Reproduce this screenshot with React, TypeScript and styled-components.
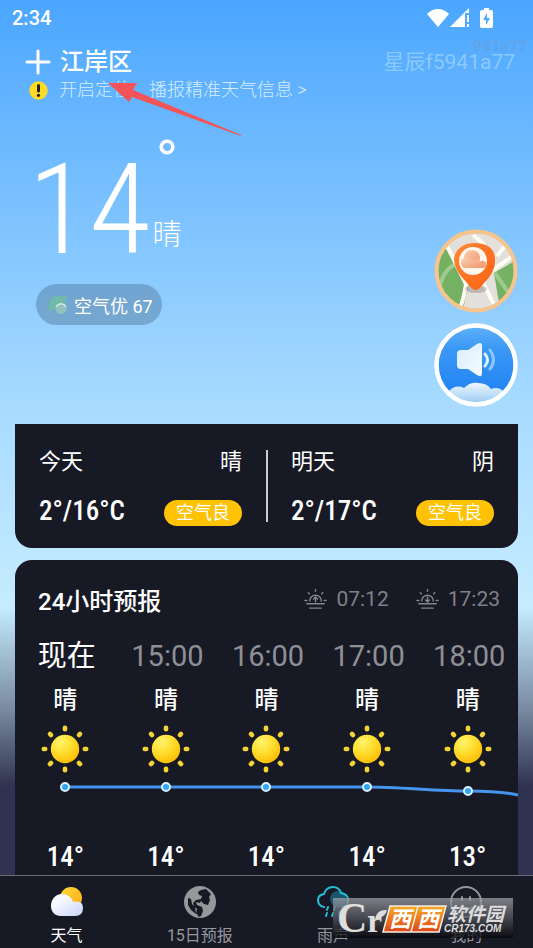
import React from 'react';
import styled, { createGlobalStyle } from 'styled-components';

const GlobalStyle = createGlobalStyle`
  *, *::before, *::after { box-sizing: border-box; }
  body {
    margin: 0;
    font-family: Roboto, "Noto Sans CJK SC", sans-serif;
    color: #fff;
  }
  button { font: inherit; color: inherit; background: none; border: 0; padding: 0; cursor: pointer; }
  svg { display: block; }
`;

const Shell = styled.div`
  position: relative;
  display: flex;
  flex-direction: column;
  height: 100vh;
  background: linear-gradient(180deg, #4ba6ff 0%, #6bb8ff 14%, #a8dbff 43%, #c5ecff 64%, #77889f 75%, #2f3250 83%, #2f3250 100%);
`;

const StatusBar = styled.div`
  display: flex;
  align-items: center;
  justify-content: space-between;
  height: 36px;
  padding: 0 40px 0 12px;
  font-size: 20px;
  font-weight: 500;
`;

const StatusIcons = styled.div`
  display: flex;
  align-items: center;
`;

const BatterySlot = styled.span`
  margin-left: 10px;
`;

const Scroller = styled.main`
  flex: 1;
  min-height: 0;
  overflow: hidden;
  padding: 0 15px;
`;

const Header = styled.header`
  display: flex;
  align-items: center;
  justify-content: space-between;
  height: 44px;
  padding: 8px 3px 0 10px;
`;

const Place = styled.button`
  display: flex;
  align-items: center;
  gap: 9px;
  font-size: 24px;
  font-weight: 500;
  line-height: 32px;
`;

const UserId = styled.span`
  font-size: 21px;
  line-height: 32px;
  color: rgba(190, 228, 255, 0.5);
`;

const Notice = styled.button`
  display: flex;
  align-items: center;
  gap: 11px;
  height: 20px;
  margin-left: 14px;
  font-size: 18px;
  font-weight: 300;
  line-height: 20px;
  color: #d3ecff;
`;

const Hero = styled.section`
  display: flex;
  justify-content: space-between;
  height: 324px;
  padding-left: 21px;
`;

const Now = styled.div`
  display: flex;
  flex-direction: column;
  align-items: flex-start;
  padding-top: 36px;
`;

const Reading = styled.div`
  display: flex;
  align-items: flex-start;
  gap: 2px;
  height: 128px;
`;

const BigTemp = styled.span`
  padding-top: 10px;
  font-family: "Roboto Condensed", Roboto, sans-serif;
  font-size: 126px;
  font-weight: 300;
  line-height: 128px;
  margin-left: -8px;
`;

const Aside = styled.div`
  display: flex;
  flex-direction: column;
  justify-content: space-between;
  align-items: center;
  height: 118px;
  padding-top: 3px;
  font-size: 29px;
  font-weight: 300;
  line-height: 38px;
`;

const AirQuality = styled.button`
  display: flex;
  align-items: center;
  gap: 7px;
  height: 41px;
  margin-top: 20px;
  padding: 0 9px 0 13px;
  border-radius: 21px;
  background: rgba(74, 112, 146, 0.42);
  font-size: 18px;
`;

const Shortcuts = styled.div`
  display: flex;
  flex-direction: column;
  gap: 10px;
  padding-top: 129px;
`;

const Card = styled.section<{ $joined?: boolean }>`
  border-radius: ${(p) => (p.$joined ? '0 0 17px 17px' : '17px')};
  background: #171925;
  margin-bottom: 12px;
`;

const Days = styled(Card)`
  display: grid;
  grid-template-columns: 1fr 1px 1fr;
  padding: 26px 0 22px;
`;

const Hourly = styled(Card)`
  padding-bottom: 40px;
`;

const Divider = styled.div`
  background: #c9cad2;
  width: 2px;
  height: 72px;
`;

const Day = styled.article`
  display: flex;
  flex-direction: column;
  justify-content: space-between;
  height: 76px;
  padding: 2px 24px 0;
`;

const DayLine = styled.div`
  display: flex;
  align-items: center;
  justify-content: space-between;
  font-size: 22px;
  line-height: 20px;
  white-space: nowrap;
`;

const Range = styled.span`
  font-family: "Roboto Condensed", Roboto, sans-serif;
  font-size: 27px;
  line-height: 24px;
  font-weight: 500;
`;

const Badge = styled.span`
  margin-top: 4px;
  padding: 0 12px;
  border-radius: 14px;
  background: #ffc204;
  font-size: 18px;
  line-height: 26px;
`;

const HourlyHead = styled.div`
  display: flex;
  align-items: center;
  height: 78px;
  padding: 0 18px 0 23px;
`;

const HourlyTitle = styled.h2`
  flex: 1;
  margin: 0;
  font-size: 24px;
  font-weight: 500;
`;

const SunTime = styled.span`
  display: flex;
  align-items: center;
  gap: 9px;
  margin-left: 27px;
  font-size: 21px;
  color: #808188;
`;

const Hours = styled.div`
  display: grid;
  grid-template-columns: repeat(5, 1fr);
  justify-items: center;
`;

const HourTime = styled.span<{ $current: boolean }>`
  padding-left: 3px;
  font-size: 29px;
  line-height: 36px;
  color: ${(p) => (p.$current ? '#fff' : '#8f9095')};
`;

const HourSky = styled.span`
  margin: 8px 0 6px;
  font-size: 24px;
  font-weight: 500;
  line-height: 36px;
`;

const HourTemp = styled.span`
  font-family: "Roboto Condensed", Roboto, sans-serif;
  font-size: 27px;
  font-weight: 500;
  line-height: 30px;
`;

const Curve = styled.svg`
  width: 100%;
  margin: 6px 0 42px;
`;

const Hour = styled.div`
  display: flex;
  flex-direction: column;
  align-items: center;
  white-space: nowrap;
`;

const TabBar = styled.nav`
  position: relative;
  display: grid;
  grid-template-columns: repeat(4, 1fr);
  height: 73px;
  border-top: 1px solid #686975;
  background: #171925;
`;

const Tab = styled.button<{ $active?: boolean }>`
  display: flex;
  flex-direction: column;
  align-items: center;
  gap: 7px;
  padding-top: 10px;
  font-size: 16px;
  line-height: 22px;
  color: ${(p) => (p.$active ? '#fff' : '#96979c')};
`;

const Pointer = styled.svg`
  position: absolute;
  left: 108px;
  top: 80px;
  pointer-events: none;
`;

const Ghost = styled.span`
  position: absolute;
  right: 6px;
  top: 37px;
  font-size: 16px;
  font-weight: 700;
  line-height: 20px;
  color: rgba(110, 150, 195, 0.4);
`;

const SiteMark = styled.svg`
  position: absolute;
  right: 20px;
  bottom: 10px;
  pointer-events: none;
`;

const WifiIcon = () => (
  <svg width="22" height="18" viewBox="0 0 22 18" fill="#fff"><path d="M11 18 0 5Q5 0 11 0t11 5Z" /></svg>
);
const SignalIcon = () => (
  <svg width="21" height="20" viewBox="0 0 21 20" fill="#fff">
    <path d="M20 0v5h-4v14H1Z" /><path d="M18 7h2v7h-2zM18 16h2v3h-2z" />
  </svg>
);
const BatteryIcon = () => (
  <svg width="13" height="20" viewBox="0 0 13 20">
    <path d="M4 0h5v2h2q2 0 2 2v14q0 2-2 2H2q-2 0-2-2V4q0-2 2-2h2Z" fill="#fff" />
    <path d="M7 5 3 12h3v5l4-7H7Z" fill="#50a8ff" />
  </svg>
);
const PlusIcon = () => (
  <svg width="26" height="26" viewBox="0 0 26 26" stroke="#fff" strokeWidth="3" strokeLinecap="round"><path d="M13 2v22M2 13h22" /></svg>
);
const AlertIcon = () => (
  <svg width="19" height="19" viewBox="0 0 19 19">
    <circle cx="9.5" cy="9.5" r="9.2" fill="#fedb25" />
    <path d="M9.5 4.5v5.500" stroke="#26221a" strokeWidth="3" strokeLinecap="round" /><circle cx="9.5" cy="14.300" r="1.600" fill="#26221a" />
  </svg>
);
const DegreeRing = () => (
  <svg width="16" height="16" viewBox="0 0 16 16"><circle cx="8" cy="8" r="5.800" fill="none" stroke="#fff" strokeWidth="3.600" /></svg>
);
const LeafIcon = () => (
  <svg width="18" height="19" viewBox="0 0 18 19">
    <path d="M0 18V9Q1 1 9 1h9q-2 3-2 8-1 6-9 5-5 0-7 4Z" fill="#6fbf9f" opacity=".8" />
    <circle cx="12" cy="13.500" r="5.500" fill="#91c3bb" /><path d="M7 12a5.500 5.500 0 0 1 10 0" fill="none" stroke="#d9eef0" strokeWidth="1.200" />
  </svg>
);

const MapIcon = () => (
  <svg width="84" height="84" viewBox="0 0 84 84">
    <defs>
      <clipPath id="mapClip"><circle cx="42" cy="42" r="38" /></clipPath>
      <linearGradient id="pinFill" x1="0" y1="0" x2="1" y2="1"><stop offset="0" stopColor="#ff8a35" /><stop offset="1" stopColor="#fb5f13" /></linearGradient>
      <linearGradient id="pinCloud" x1="0" y1="0" x2="1" y2="1"><stop offset="0" stopColor="#f9cdb4" /><stop offset="1" stopColor="#f09466" /></linearGradient>
    </defs>
    <g clipPath="url(#mapClip)">
      <rect width="84" height="84" fill="#e3dfda" />
      <path d="M2 10 14 22 34 58 28 84H0V12ZM84 30 60 44 65 74 78 78 84 62Z" fill="#75b162" />
      <path d="M5 60Q10 37 26 34" fill="none" stroke="#9fcb91" strokeWidth="4" />
      <path d="m61 44 17 25" stroke="#9fcb91" strokeWidth="4" />
      <path d="m12 15 20 40q-2 14-6 24M34 50l14 1 15 31M57 42l26-18M63 27 74 13M39 6l12 10" fill="none" stroke="#fffdf4" strokeWidth="4" />
    </g>
    <ellipse cx="42" cy="60" rx="11" ry="4" fill="#776b62" opacity=".35" />
    <path d="M42 61Q38 61 33 54 20 41 20 31A20 17 0 0 1 42 14Q62 15 61 33 61 43 50 54 45 61 42 61Z" fill="url(#pinFill)" />
    <circle cx="39" cy="32" r="14" fill="#fff7ed" />
    <circle cx="38" cy="29" r="8" fill="url(#pinCloud)" />
    <path d="M32 39q-5 0-5-5t5-5q4 0 6 3 5-3 9 0 5-1 5 4 0 3-4 3Z" fill="url(#pinCloud)" />
    <circle cx="42" cy="42" r="39.500" fill="none" stroke="#f6c48c" strokeWidth="4" />
  </svg>
);

const SoundIcon = () => (
  <svg width="84" height="84" viewBox="0 0 84 84">
    <defs>
      <clipPath id="soundClip"><circle cx="42" cy="42" r="38" /></clipPath>
      <linearGradient id="soundSky" x1="0" y1="0" x2="0" y2="1"><stop offset="0" stopColor="#64b5fa" /><stop offset=".3" stopColor="#3b98f5" /><stop offset=".8" stopColor="#2385f5" /></linearGradient>
      <linearGradient id="soundCloud" x1="0" y1="0" x2="0" y2="1"><stop offset="0" stopColor="#eef8ff" /><stop offset="1" stopColor="#8cc1f1" /></linearGradient>
      <linearGradient id="horn" x1="0" y1="0" x2="1" y2="1"><stop offset="0" stopColor="#d9edff" /><stop offset="1" stopColor="#f5fbff" /></linearGradient>
    </defs>
    <g clipPath="url(#soundClip)">
      <rect width="84" height="84" fill="url(#soundSky)" />
      <path d="M0 84V70q8-4 15-2 7-7 15-3 6-6 14-5 9 0 13 6 8-3 13 3 6-1 14 2v13Z" fill="url(#soundCloud)" />
    </g>
    <path d="M27 27h7l9-6q5-3 5 2v27q0 5-5 2l-9-6h-7q-4 0-4-4V31q0-4 4-4Z" fill="url(#horn)" />
    <g fill="none" strokeLinecap="round" strokeWidth="3"><path d="M51 31q5 6 0 12" stroke="#e0f1ff" /><path d="M56 27q7 10 0 19" stroke="#8cc6ff" /></g>
    <circle cx="42" cy="42" r="39.500" fill="none" stroke="#fff" strokeWidth="4.500" />
  </svg>
);

const SunTimeIcon = ({ setting }: { setting?: boolean }) => (
  <svg width="23" height="22" viewBox="0 0 24 22" fill="none" stroke="#85868c" strokeWidth="1.500" strokeLinecap="round">
    <path d="M6 13a6 6 0 1 1 12 0M12 1v2M4.500 4.500l1 1M19.500 4.500l-1 1M1 12.500h2M21 12.500h2M3 16h18M6 20.500h12" />
    <path d={setting ? 'M12 9v5m-2-2 2 2 2-2' : 'M12 14V9m-2 2 2-2 2 2'} />
  </svg>
);

const SunIcon = () => (
  <svg width="50" height="50" viewBox="0 0 50 50">
    <defs>
      <radialGradient id="sunDisc" cx=".35" cy=".25" r=".8"><stop offset="0" stopColor="#fff36c" /><stop offset=".45" stopColor="#ffe034" /><stop offset="1" stopColor="#ffbc00" /></radialGradient>
    </defs>
    {[0, 45, 90, 135, 180, 225, 270, 315].map((a) => (
      <rect key={a} x="22.700" y="1.500" width="4.600" height="6" rx="2.200" fill="#f5d437" transform={`rotate(${a} 25 25)`} />
    ))}
    <circle cx="25" cy="25" r="14.200" fill="url(#sunDisc)" />
  </svg>
);

const WeatherTabIcon = () => (
  <svg width="32" height="32" viewBox="0 0 32 32">
    <defs>
      <linearGradient id="tabSun" x1="0" y1="0" x2="1" y2="1"><stop offset="0" stopColor="#ffdf38" /><stop offset="1" stopColor="#ffa414" /></linearGradient>
      <linearGradient id="tabCloud" x1="0" y1="0" x2="1" y2="1"><stop offset=".3" stopColor="#f7f9ff" /><stop offset="1" stopColor="#c5d4fb" /></linearGradient>
    </defs>
    <circle cx="20" cy="12" r="11" fill="url(#tabSun)" />
    <path d="M10 30C4 30 0 26 0 20S4 8 11 8q8 0 11 8 10-2 10 6 0 8-8 8Z" fill="url(#tabCloud)" />
  </svg>
);
const GlobeIcon = () => (
  <svg width="32" height="32" viewBox="0 0 32 32">
    <circle cx="16" cy="16" r="16" fill="#96979b" />
    <path d="M17 4 22 3l5 5-2 3 1 3-2 5-4-1-3-3-1 2-4-1 1 3 5 2 1 4-2 5-2 1-3-4 1-4-3-3-1-3 3-3 5-1 1-3-3-1-1-3ZM4 12l3 1 1 5 3 3 1 7-5-4-3-5Z" fill="#171925" />
  </svg>
);
const RainIcon = () => (
  <svg width="32" height="32" viewBox="0 0 32 32" fill="none" stroke="#20bfd8" strokeWidth="2" strokeLinecap="round">
    <circle cx="21" cy="13" r="8" fill="#19566d" stroke="none" />
    <path d="M7 21q-6-1-6-7 0-5 6-6 2-7 9-7 6 0 8 6 7 1 7 7 0 6-6 7M11 21l-1 3M18 21l-1 3M10 27l-1 3M16 27l-1 3M23 25l-1 3" />
  </svg>
);
const FaceIcon = () => (
  <svg width="32" height="32" viewBox="0 0 32 32" fill="none" stroke="#96979b" strokeWidth="2" strokeLinecap="round">
    <circle cx="16" cy="16" r="15" /><path d="M12 11v3M20 11v3M10 21q6 6 12 0" />
  </svg>
);

const hours = [
  { time: '现在', temp: '14°' },
  { time: '15:00', temp: '14°' },
  { time: '16:00', temp: '14°' },
  { time: '17:00', temp: '14°' },
  { time: '18:00', temp: '13°' },
];
const days = [
  { name: '今天', sky: '晴', range: '2°/16°C' },
  { name: '明天', sky: '阴', range: '2°/17°C' },
];
const points = [[50, 7], [151, 7], [251, 7], [352, 7], [453, 11]];

const DayCell = ({ day }: { day: (typeof days)[number] }) => (
  <Day>
    <DayLine><span>{day.name}</span><span>{day.sky}</span></DayLine>
    <DayLine><Range>{day.range}</Range><Badge>空气良</Badge></DayLine>
  </Day>
);

export default function App() {
  return (
    <Shell>
      <GlobalStyle />
      <StatusBar>
        <span>2:34</span>
        <StatusIcons><WifiIcon /><SignalIcon /><BatterySlot><BatteryIcon /></BatterySlot></StatusIcons>
      </StatusBar>
      <Scroller>
        <Header>
          <Place><PlusIcon /><span>江岸区</span></Place>
          <UserId>星辰f5941a77</UserId>
        </Header>
        <Notice><AlertIcon /><span>开启定位，播报精准天气信息 &gt;</span></Notice>
        <Hero>
          <Now>
            <Reading>
              <BigTemp>14</BigTemp>
              <Aside><DegreeRing /><span>晴</span></Aside>
            </Reading>
            <AirQuality><LeafIcon /><span>空气优 67</span></AirQuality>
          </Now>
          <Shortcuts>
            <button aria-label="地图"><MapIcon /></button>
            <button aria-label="播报"><SoundIcon /></button>
          </Shortcuts>
        </Hero>
        <Days $joined>
          <DayCell day={days[0]} />
          <Divider />
          <DayCell day={days[1]} />
        </Days>
        <Hourly>
          <HourlyHead>
            <HourlyTitle>24小时预报</HourlyTitle>
            <SunTime><SunTimeIcon />07:12</SunTime>
            <SunTime><SunTimeIcon setting />17:23</SunTime>
          </HourlyHead>
          <Hours>
            {hours.map((h, i) => (
              <Hour key={h.time}>
                <HourTime $current={i === 0}>{h.time}</HourTime>
                <HourSky>晴</HourSky>
                <SunIcon />
              </Hour>
            ))}
          </Hours>
          <Curve viewBox="0 0 503 20">
            <path d="M50 7H352C385 7 420 11 453 11Q485 11 503 15" fill="none" stroke="#4695ee" strokeWidth="3" />
            {points.map(([x, y]) => (
              <circle key={x} cx={x} cy={y} r="4" fill="#35a4f5" stroke="#d8f0ff" strokeWidth="2" />
            ))}
          </Curve>
          <Hours>{hours.map((h) => <HourTemp key={h.time}>{h.temp}</HourTemp>)}</Hours>
        </Hourly>
      </Scroller>
      <TabBar>
        <Tab $active><WeatherTabIcon />天气</Tab>
        <Tab><GlobeIcon />15日预报</Tab>
        <Tab><RainIcon />雨声</Tab>
        <Tab><FaceIcon />我的</Tab>
        <SiteMark width="180" height="40" viewBox="0 0 180 40">
          <defs>
            <linearGradient id="markBack" x1="0" y1="0" x2="0" y2="1"><stop offset="0" stopColor="#a0a0a6" stopOpacity=".75" /><stop offset=".5" stopColor="#55565e" stopOpacity=".75" /><stop offset="1" stopColor="#06070b" stopOpacity=".75" /></linearGradient>
            <linearGradient id="markOrange" x1="0" y1="0" x2="0" y2="1"><stop offset="0" stopColor="#f5ad2a" /><stop offset="1" stopColor="#df4618" /></linearGradient>
          </defs>
          <rect width="180" height="40" fill="url(#markBack)" />
          <text x="4" y="34" fontFamily="Liberation Serif, serif" fontSize="42" fontWeight="700" fill="#dedede">C</text>
          <text x="34" y="34" fontFamily="Liberation Serif, serif" fontSize="34" fontWeight="700" fill="#dedede">r</text>
          <path d="M42 21q2-10 12-9-2 8-12 9Z" fill="#dedede" />
          <path d="M57 8h28l-7 26H50ZM85 8h28l-7 26H78Z" fill="url(#markOrange)" stroke="#f6eee6" strokeWidth="1.500" />
          <g fontFamily="Noto Sans CJK SC, sans-serif" fontStyle="italic" fontWeight="700" fill="#fff">
            <text x="56" y="29" fontSize="22">西</text>
            <text x="84" y="29" fontSize="22">西</text>
            <text x="114" y="23" fontSize="19" fill="#dcdcdc">软件园</text>
            <text x="111" y="34" fontFamily="Liberation Sans, sans-serif" fontSize="10" fill="#dcdcdc">CR173.COM</text>
          </g>
        </SiteMark>
      </TabBar>
      <Ghost>941a77</Ghost>
      <Pointer width="136" height="58" viewBox="0 0 136 58"><path d="M0 3h29l-4 7 108 45v1L24 17l-3 5Z" fill="#f45457" /></Pointer>
    </Shell>
  );
}
